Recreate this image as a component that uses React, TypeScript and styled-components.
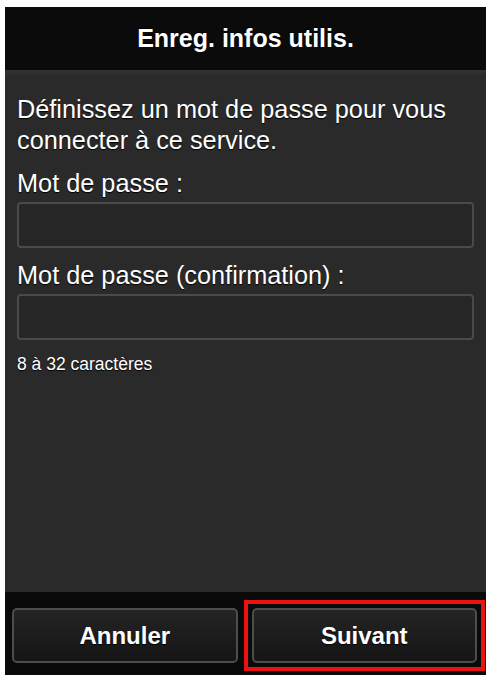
import * as React from "react";
import styled, { createGlobalStyle } from "styled-components";

const GlobalStyle = createGlobalStyle`
  html, body {
    margin: 0;
    padding: 0;
    background: #ffffff;
  }
  body {
    font-family: "Liberation Sans", Arial, Helvetica, sans-serif;
  }
`;

const SPage = styled.div`
  width: 490px;
  height: 681px;
  padding: 7px 4px 6px 5px;
  box-sizing: border-box;
`;

const SScreen = styled.div`
  width: 100%;
  height: 100%;
  display: flex;
  flex-direction: column;
  background: #2a2a2a;
  color: #ffffff;
`;

const SHeader = styled.div`
  height: 63px;
  flex-shrink: 0;
  display: flex;
  align-items: center;
  justify-content: center;
  background: #0b0b0b;
  font-size: 25px;
  font-weight: bold;
  text-shadow: 0 -1px 1px #000;
`;

const SBody = styled.div`
  flex: 1;
  display: flex;
  flex-direction: column;
  padding: 24px 12px 0 12px;
  background: linear-gradient(#333 0, #2a2a2a 6px, #2a2a2a);
  text-shadow: 0 1px 1px #000;
`;

const SIntro = styled.p`
  margin: 0;
  font-size: 25.3px;
  line-height: 31px;
`;

const SLabel = styled.label`
  display: block;
  margin-top: 12px;
  font-size: 25.3px;
  line-height: 30px;
`;

const SInput = styled.div`
  height: 42px;
  margin-top: 4px;
  border: 2px solid #4a4a4a;
  border-radius: 4px;
  background: #262626;
`;

const SHint = styled.p`
  margin: 14px 0 0;
  font-size: 17.5px;
`;

const SFooter = styled.div`
  height: 83px;
  flex-shrink: 0;
  display: flex;
  gap: 15px;
  padding: 16px 6px 12px 7px;
  box-sizing: border-box;
  background: #0a0a0a;
`;

const SButtonFrame = styled.div<{ highlighted?: boolean }>`
  flex: 1;
  display: flex;
  margin: ${({ highlighted }) => (highlighted ? "-8px -5px -8px -9px" : "0")};
  padding: ${({ highlighted }) => (highlighted ? "4px" : "0")};
  border: ${({ highlighted }) => (highlighted ? "4px solid #ee1111" : "none")};
`;

const SButton = styled.button`
  flex: 1;
  border: 2px solid #4d4d4d;
  border-radius: 5px;
  background: linear-gradient(#242424, #151515);
  color: #ffffff;
  font-family: "Liberation Sans", Arial, Helvetica, sans-serif;
  font-size: 24px;
  font-weight: bold;
  text-shadow: 0 1px 1px #000;
`;

const App = () => {
  return (
    <>
      <GlobalStyle />
      <SPage>
        <SScreen>
          <SHeader>Enreg. infos utilis.</SHeader>
          <SBody>
            <SIntro>
              Définissez un mot de passe pour vous connecter à ce service.
            </SIntro>
            <SLabel>Mot de passe :</SLabel>
            <SInput />
            <SLabel>Mot de passe (confirmation) :</SLabel>
            <SInput />
            <SHint>8 à 32 caractères</SHint>
          </SBody>
          <SFooter>
            <SButtonFrame>
              <SButton>Annuler</SButton>
            </SButtonFrame>
            <SButtonFrame highlighted>
              <SButton>Suivant</SButton>
            </SButtonFrame>
          </SFooter>
        </SScreen>
      </SPage>
    </>
  );
};

export default App;
